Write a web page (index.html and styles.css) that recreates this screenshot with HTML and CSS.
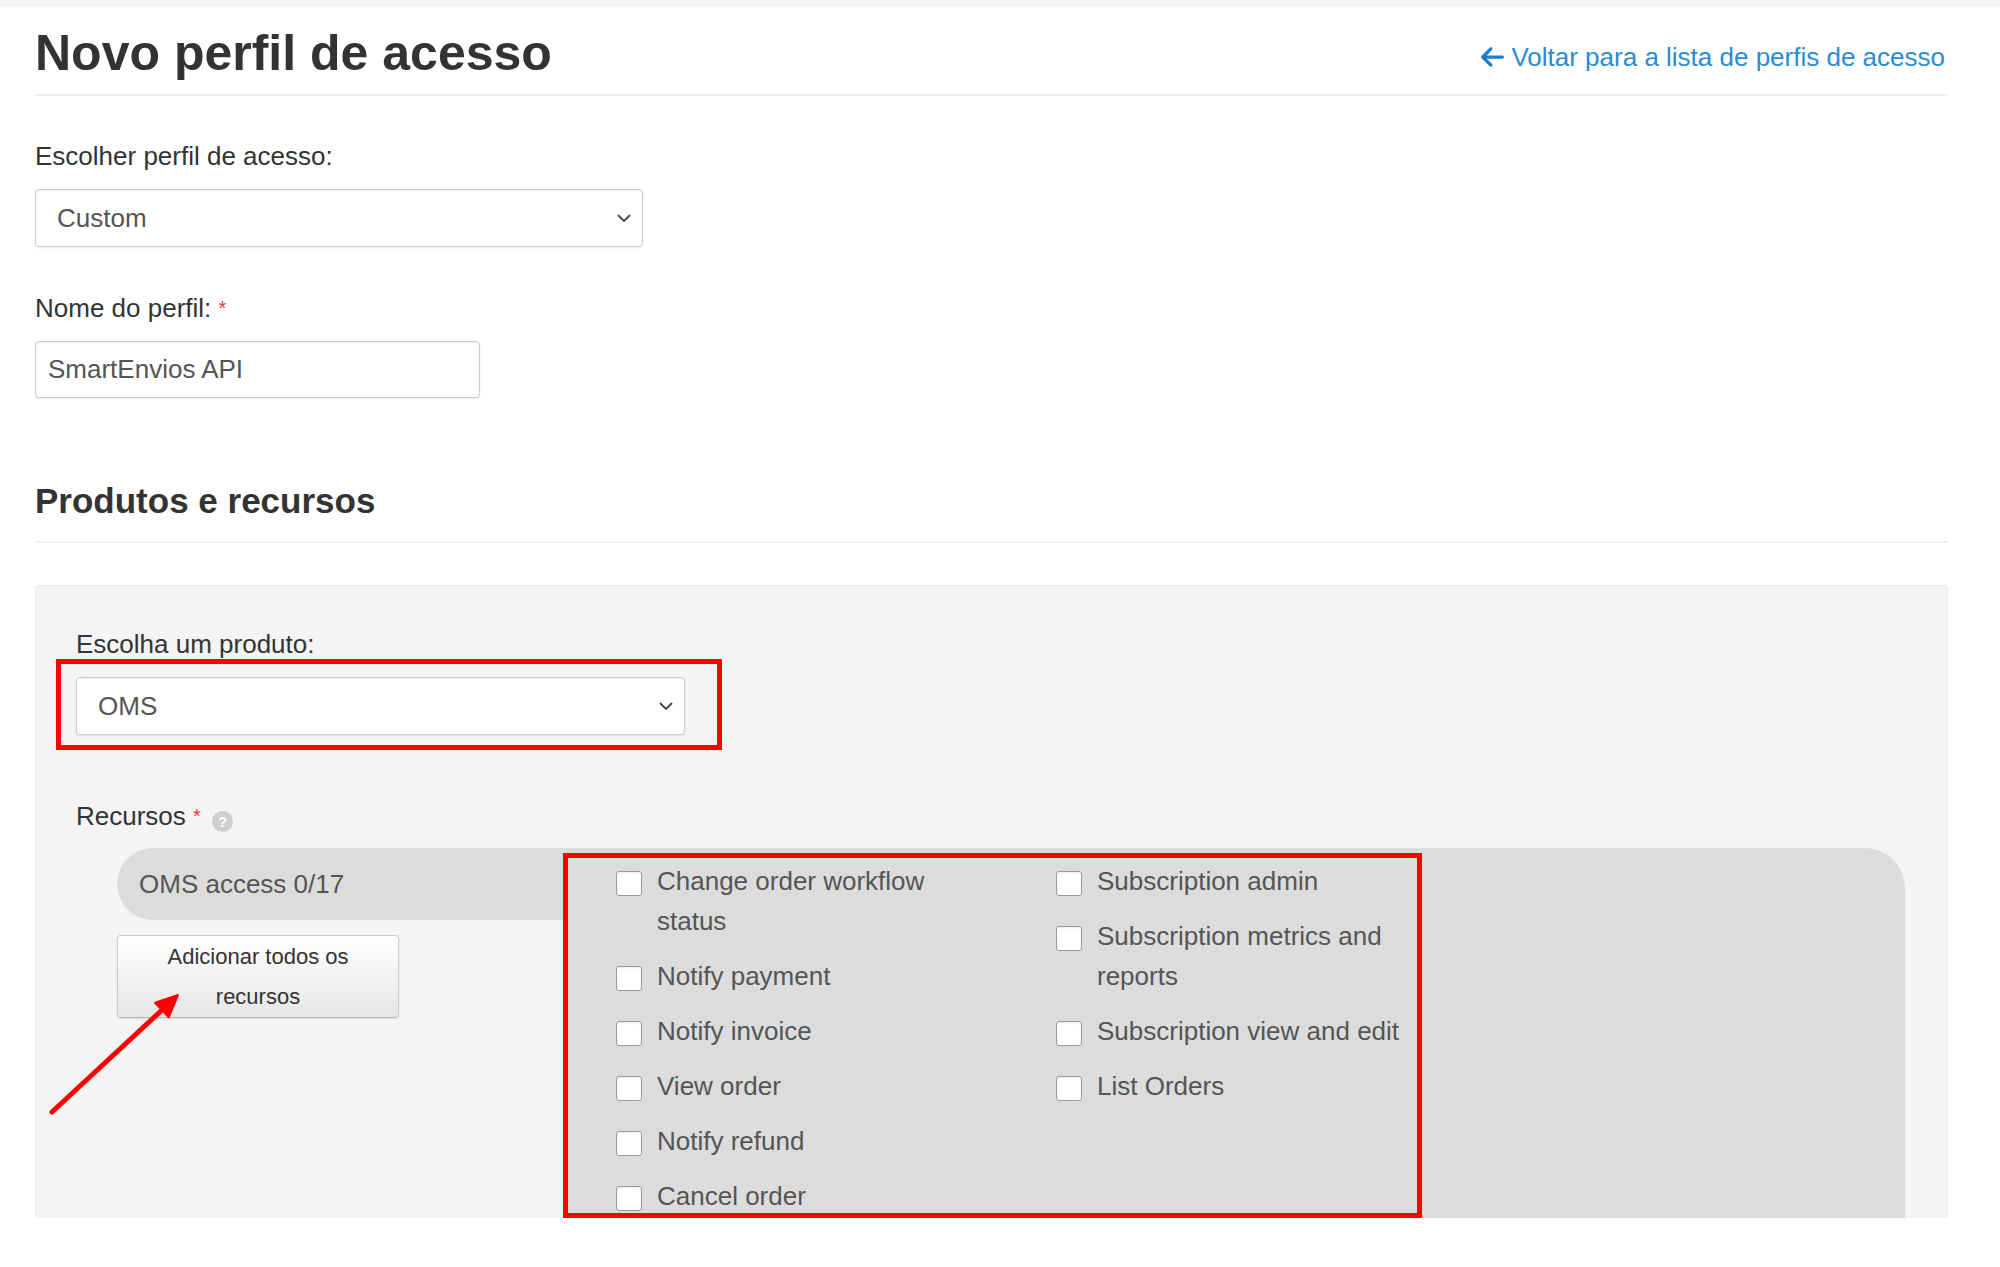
FILE: index.html
```html
<!DOCTYPE html>
<html>
<head>
  <title>Novo perfil de acesso</title>
  <link rel="stylesheet" href="styles.css">
</head>
<body>
  <div class="topbar"></div>

  <div class="wrap">
    <div class="page-header">
      <h1 class="page-title">Novo perfil de acesso</h1>
      <a class="back-link" href="#">
        <svg class="back-icon" viewBox="0 0 448 512"><path d="M9.4 233.4c-12.5 12.5-12.5 32.8 0 45.3l160 160c12.5 12.5 32.8 12.5 45.3 0s12.5-32.8 0-45.3L109.2 288 416 288c17.7 0 32-14.3 32-32s-14.3-32-32-32l-306.7 0L214.6 118.6c12.5-12.5 12.5-32.8 0-45.3s-32.8-12.5-45.3 0l-160 160z"/></svg>
        Voltar para a lista de perfis de acesso
      </a>
    </div>

    <div class="profile-form">
      <div class="form-group">
        <label class="field-label">Escolher perfil de acesso:</label>
        <div class="select select-profile">
          <span>Custom</span>
          <svg class="chevron" viewBox="0 0 14 8"><path d="M1 1l6 6 6-6"/></svg>
        </div>
      </div>
      <div class="form-group">
        <label class="field-label" for="profile-name">Nome do perfil: <span class="req">*</span></label>
        <input id="profile-name" class="text-input" type="text" value="SmartEnvios API">
      </div>
    </div>

    <h2 class="section-title">Produtos e recursos</h2>

    <div class="panel">
      <label class="field-label product-label">Escolha um produto:</label>
      <div class="mark mark-select">
        <div class="select select-product">
          <span>OMS</span>
          <svg class="chevron" viewBox="0 0 14 8"><path d="M1 1l6 6 6-6"/></svg>
        </div>
      </div>

      <div class="field-label resources-label">Recursos <span class="req">*</span> <span class="help">?</span></div>

      <div class="resources">
        <div class="resource-side">
          <div class="resource-tab">OMS access 0/17</div>
          <button class="add-all">Adicionar todos os recursos</button>
        </div>
        <div class="resource-body">
          <div class="mark mark-list">
            <div class="check-col">
              <label class="check-item"><input type="checkbox"><span>Change order workflow status</span></label>
              <label class="check-item"><input type="checkbox"><span>Notify payment</span></label>
              <label class="check-item"><input type="checkbox"><span>Notify invoice</span></label>
              <label class="check-item"><input type="checkbox"><span>View order</span></label>
              <label class="check-item"><input type="checkbox"><span>Notify refund</span></label>
              <label class="check-item"><input type="checkbox"><span>Cancel order</span></label>
            </div>
            <div class="check-col">
              <label class="check-item"><input type="checkbox"><span>Subscription admin</span></label>
              <label class="check-item"><input type="checkbox"><span>Subscription metrics and reports</span></label>
              <label class="check-item"><input type="checkbox"><span>Subscription view and edit</span></label>
              <label class="check-item"><input type="checkbox"><span>List Orders</span></label>
            </div>
          </div>
        </div>
      </div>

      <!-- red annotation arrow -->
      <svg class="note-arrow" viewBox="0 0 150 135">
        <line x1="12" y1="127" x2="122" y2="25"/>
        <polygon points="138,10 128.7,32.3 115.1,17.7"/>
      </svg>
    </div>
  </div>
</body>
</html>
```

FILE: styles.css
```css
body {
  margin: 0;
  font-family: "Liberation Sans", Arial, sans-serif;
  color: #333;
  background: #fff;
}

.topbar {
  height: 7px;
  background: #f5f5f5;
}

.wrap {
  padding: 0 52px 0 35px;
}

.page-header {
  display: flex;
  justify-content: space-between;
  align-items: baseline;
  padding: 16px 0 11px;
  border-bottom: 2px solid #eeeeee;
}

.page-title {
  margin: 0;
  font-size: 50px;
  line-height: 60px;
  font-weight: bold;
  color: #333;
}

.back-link {
  display: flex;
  align-items: center;
  gap: 7px;
  margin-right: 3px;
  font-size: 26px;
  color: #2a8bd5;
  text-decoration: none;
}

.back-icon {
  width: 23px;
  height: 26px;
  fill: #1b7cc8;
}

.profile-form {
  padding-top: 45px;
}

.form-group {
  margin-bottom: 46px;
}

.field-label {
  display: block;
  font-size: 26px;
  line-height: 30px;
  margin-bottom: 18px;
  color: #333;
}

.req {
  color: #e53a3a;
  font-size: 20px;
  vertical-align: top;
}

.select {
  display: flex;
  align-items: center;
  justify-content: space-between;
  box-sizing: border-box;
  height: 58px;
  padding: 0 11px 0 21px;
  background: #fff;
  border: 1px solid #cccccc;
  border-radius: 4px;
  box-shadow: inset 0 1px 1px rgba(0, 0, 0, 0.075), 0 1px 2px rgba(0, 0, 0, 0.08);
  font-size: 26px;
  color: #555;
}

.select-profile {
  width: 608px;
}

.select-product {
  width: 609px;
}

.chevron {
  width: 14px;
  height: 8px;
  fill: none;
  stroke: #444;
  stroke-width: 1.8;
}

.text-input {
  display: block;
  box-sizing: border-box;
  width: 445px;
  height: 57px;
  padding: 0 12px;
  border: 1px solid #cccccc;
  border-radius: 4px;
  box-shadow: inset 0 1px 1px rgba(0, 0, 0, 0.075), 0 1px 2px rgba(0, 0, 0, 0.08);
  font-family: inherit;
  font-size: 26px;
  color: #555;
  outline: none;
}

.section-title {
  margin: 82px 0 0;
  padding-bottom: 19px;
  border-bottom: 2px solid #f0f0f0;
  font-size: 35px;
  line-height: 42px;
  font-weight: bold;
  color: #333;
}

.panel {
  position: relative;
  box-sizing: border-box;
  height: 633px;
  margin-top: 42px;
  padding: 43px 42px 0 40px;
  background: #f4f4f4;
  border: 1px solid #ebebeb;
  border-bottom: 0;
  border-radius: 4px 4px 0 0;
  overflow: hidden;
}

.product-label {
  margin-bottom: 0;
}

.mark {
  box-sizing: border-box;
  border: 5px solid #ff0000;
}

.mark-select {
  width: 666px;
  margin-left: -20px;
  padding: 13px 0 10px 15px;
}

.resources-label {
  height: 30px;
  margin: 51px 0 0;
}

.help {
  display: inline-block;
  width: 21px;
  height: 21px;
  margin-left: 4px;
  border-radius: 50%;
  background: #cfcfcf;
  color: #fff;
  font-size: 15px;
  line-height: 21px;
  text-align: center;
  font-weight: bold;
  vertical-align: -2px;
}

.resources {
  display: flex;
  margin: 17px 0 0 41px;
}

.resource-side {
  width: 446px;
  flex-shrink: 0;
}

.resource-tab {
  display: flex;
  align-items: center;
  height: 72px;
  padding-left: 22px;
  background: #dcdcdc;
  border-radius: 36px 0 0 36px;
  font-size: 26px;
  color: #555;
}

.add-all {
  display: block;
  box-sizing: border-box;
  width: 282px;
  height: 83px;
  margin-top: 15px;
  padding: 0 12px;
  background: linear-gradient(#ffffff, #e6e6e6);
  border: 1px solid #cccccc;
  border-bottom-color: #b8b8b8;
  border-radius: 4px;
  box-shadow: 0 1px 2px rgba(0, 0, 0, 0.1);
  font-family: inherit;
  font-size: 22px;
  line-height: 40px;
  color: #333;
  cursor: pointer;
}

.resource-body {
  flex: 1;
  min-height: 420px;
  padding-top: 5px;
  background: #dcdcdc;
  border-radius: 0 40px 0 0;
}

.mark-list {
  display: flex;
  width: 859px;
  height: 365px;
  padding: 3px 0 0 48px;
  overflow: hidden;
}

.check-col {
  width: 440px;
  flex-shrink: 0;
}

.check-item {
  display: flex;
  align-items: flex-start;
  margin-bottom: 15px;
  font-size: 26px;
  line-height: 40px;
  color: #555;
}

.check-item span {
  max-width: 320px;
}

.check-item input {
  appearance: none;
  flex-shrink: 0;
  width: 26px;
  height: 25px;
  margin: 10px 15px 0 0;
  background: #fff;
  border: 1px solid #9a9a9a;
  border-radius: 3px;
  box-shadow: inset 0 1px 2px rgba(0, 0, 0, 0.08);
}

.note-arrow {
  position: absolute;
  left: 4px;
  top: 399px;
  width: 150px;
  height: 135px;
}

.note-arrow line {
  stroke: #ff0000;
  stroke-width: 5;
  stroke-linecap: round;
}

.note-arrow polygon {
  fill: #ff0000;
  stroke: #ff0000;
  stroke-width: 2;
  stroke-linejoin: round;
}
```
